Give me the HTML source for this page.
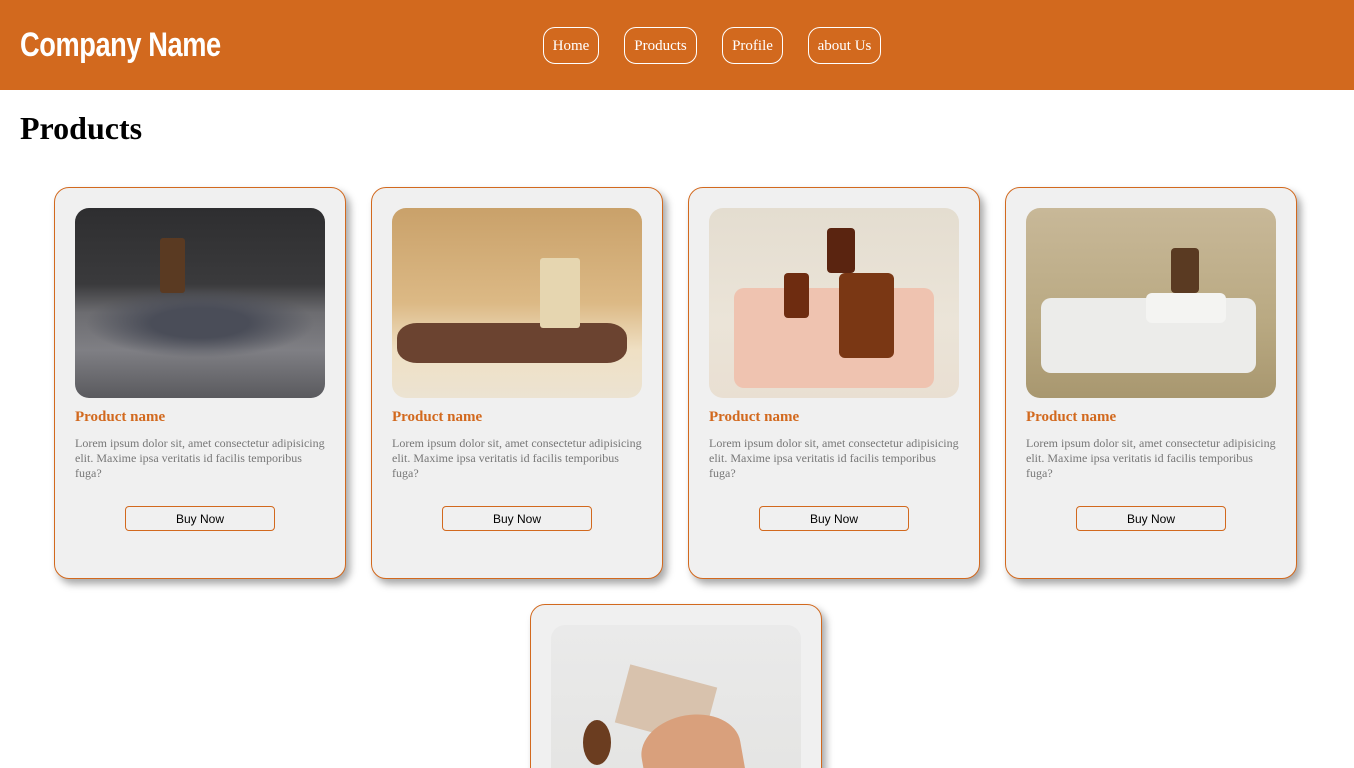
<!DOCTYPE html>
<html style="height:768px;overflow:hidden"><head><style>
*{box-sizing:border-box;margin:0;padding:0}
body{width:1354px;height:768px;overflow:hidden;background:#fff;font-family:"Liberation Serif",serif;position:relative}
header{height:90px;background:#D2691E;position:relative}
.logo{position:absolute;left:20px;top:25px;color:#fff;font-family:"Liberation Sans",sans-serif;font-weight:bold;font-size:34px;letter-spacing:-0.5px;transform:scaleX(0.8);transform-origin:left;line-height:40px;white-space:nowrap}
nav a{position:absolute;top:27px;height:37px;border:1px solid #fff;border-radius:12px;color:#fff;font-size:15px;line-height:36px;text-align:center;text-decoration:none}
h1{position:absolute;left:20px;top:110px;font-size:32px;font-weight:bold;line-height:36px}
.card{position:absolute;width:292px;height:392px;background:#f0f0f0;border:1px solid #D2691E;border-radius:15px;box-shadow:4px 5px 8px rgba(0,0,0,.35)}
.img{position:absolute;left:20px;top:20px;width:250px;height:190px;border-radius:14px;overflow:hidden}
.t{position:absolute;left:20px;top:221px;color:#D2691E;font-weight:bold;font-size:15px}
.d{position:absolute;left:20px;top:248px;width:255px;color:#777;font-size:12px;line-height:15px}
.b{position:absolute;left:70px;top:318px;width:150px;height:25px;border:1px solid #D2691E;border-radius:4px;font-family:"Liberation Sans",sans-serif;font-size:12px;line-height:24px;text-align:center;color:#000}
</style></head><body>
<header><div class="logo">Company Name</div>
<nav><a style="left:543px;width:56px">Home</a><a style="left:624px;width:73px">Products</a><a style="left:722px;width:61px">Profile</a><a style="left:808px;width:73px">about Us</a></nav></header>
<h1>Products</h1>

<div class="card" style="left:54px;top:187px"><div class="img" style="background:linear-gradient(180deg,#2e2e30 0%,#3a3a3c 40%,#6c6c70 55%,#7f7f84 75%,#5a5a5e 100%)"><div style="position:absolute;left:10px;top:80px;width:230px;height:70px;background:radial-gradient(ellipse,#4a4d58 30%,transparent 70%)"></div><div style="position:absolute;left:85px;top:30px;width:25px;height:55px;background:#5a3a22;border-radius:3px"></div></div>
<div class="t">Product name</div><div class="d">Lorem ipsum dolor sit, amet consectetur adipisicing elit. Maxime ipsa veritatis id facilis temporibus fuga?</div><div class="b">Buy Now</div></div>

<div class="card" style="left:371px;top:187px"><div class="img" style="background:linear-gradient(180deg,#c9a16a 0%,#dcb985 50%,#efe0c4 75%,#ece3d2 100%)"><div style="position:absolute;left:5px;top:115px;width:230px;height:40px;background:#6b4330;border-radius:20px/15px"></div><div style="position:absolute;left:148px;top:50px;width:40px;height:70px;background:#e6d6b0;border-radius:3px"></div></div>
<div class="t">Product name</div><div class="d">Lorem ipsum dolor sit, amet consectetur adipisicing elit. Maxime ipsa veritatis id facilis temporibus fuga?</div><div class="b">Buy Now</div></div>

<div class="card" style="left:688px;top:187px"><div class="img" style="background:linear-gradient(180deg,#e4ddd0 0%,#ebe4d8 60%,#e9dfd2 100%)"><div style="position:absolute;left:25px;top:80px;width:200px;height:100px;background:#efc3b0;border-radius:10px"></div><div style="position:absolute;left:130px;top:65px;width:55px;height:85px;background:#7a3714;border-radius:6px"></div><div style="position:absolute;left:75px;top:65px;width:25px;height:45px;background:#6e2c10;border-radius:4px"></div><div style="position:absolute;left:118px;top:20px;width:28px;height:45px;background:#5a2410;border-radius:4px"></div></div>
<div class="t">Product name</div><div class="d">Lorem ipsum dolor sit, amet consectetur adipisicing elit. Maxime ipsa veritatis id facilis temporibus fuga?</div><div class="b">Buy Now</div></div>

<div class="card" style="left:1005px;top:187px"><div class="img" style="background:linear-gradient(180deg,#c8b898 0%,#b9a982 60%,#a8976f 100%)"><div style="position:absolute;left:15px;top:90px;width:215px;height:75px;background:#ececea;border-radius:10px"></div><div style="position:absolute;left:120px;top:85px;width:80px;height:30px;background:#f4f4f2;border-radius:6px"></div><div style="position:absolute;left:145px;top:40px;width:28px;height:45px;background:#5a3a22;border-radius:4px"></div></div>
<div class="t">Product name</div><div class="d">Lorem ipsum dolor sit, amet consectetur adipisicing elit. Maxime ipsa veritatis id facilis temporibus fuga?</div><div class="b">Buy Now</div></div>

<div class="card" style="left:530px;top:604px"><div class="img" style="background:linear-gradient(180deg,#eaeaea 0%,#e3e3e1 100%)"><div style="position:absolute;left:70px;top:50px;width:90px;height:60px;background:#d8c2ad;transform:rotate(15deg)"></div><div style="position:absolute;left:90px;top:90px;width:100px;height:70px;background:#d9a07c;transform:rotate(-10deg);border-radius:50% 50% 0 0"></div><div style="position:absolute;left:32px;top:95px;width:28px;height:45px;background:#6b3d20;border-radius:50%"></div></div></div>
</body></html>
